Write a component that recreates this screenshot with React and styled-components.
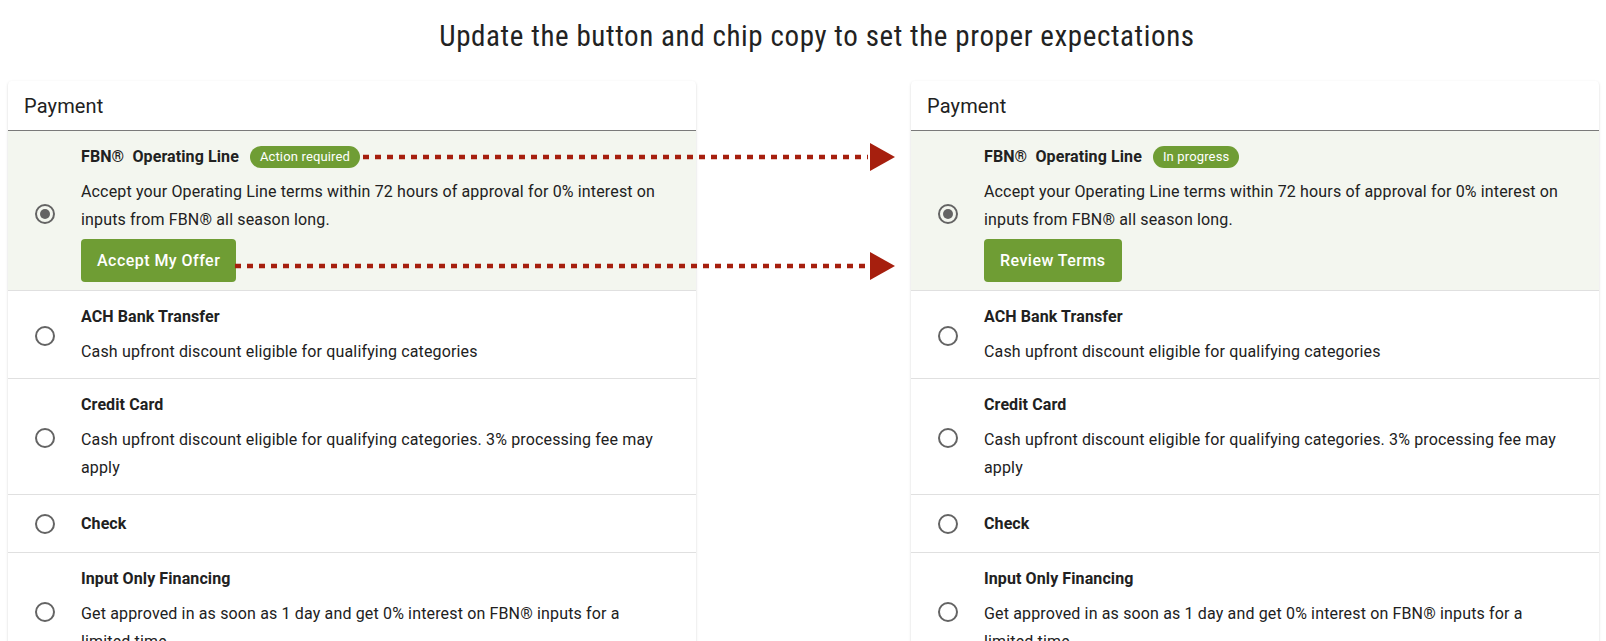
import React from "react";
import styled, { createGlobalStyle } from "styled-components";

const GlobalStyle = createGlobalStyle`
  html, body {
    margin: 0;
    padding: 0;
    background: #ffffff;
    overflow: hidden;
    font-family: Roboto, "Liberation Sans", Arial, sans-serif;
    color: #212121;
  }
  * { box-sizing: border-box; }
`;

const Page = styled.div`
  display: flex;
  flex-direction: column;
  width: 1606px;
`;

const Heading = styled.h1`
  margin: 19px 0 0;
  padding-left: 28px;
  font-family: "Roboto Condensed", Roboto, "Liberation Sans", sans-serif;
  font-weight: 400;
  font-size: 29px;
  line-height: 34px;
  text-align: center;
  color: #222222;
  letter-spacing: 0.6px;
`;

const Stage = styled.div`
  position: relative;
  display: flex;
  justify-content: space-between;
  align-items: flex-start;
  padding: 0 7px 0 8px;
  margin-top: 28px;
`;

const Panel = styled.section`
  width: 688px;
  background: #ffffff;
  border-radius: 4px;
  overflow: hidden;
  box-shadow: 0 2px 1px -1px rgba(0, 0, 0, 0.2), 0 1px 1px 0 rgba(0, 0, 0, 0.14),
    0 1px 3px 0 rgba(0, 0, 0, 0.12);
`;

const PanelHeader = styled.header`
  height: 50px;
  display: flex;
  align-items: center;
  padding: 0 16px;
  font-size: 20px;
  font-weight: 400;
  letter-spacing: 0.15px;
  color: #212121;
  border-bottom: 1px solid #7a7a7a;
`;

const Option = styled.div`
  display: flex;
  align-items: center;
  gap: 26px;
  padding: ${(p) =>
    p.$selected ? "14px 24px 8px 27px" : p.$bare ? "17px 24px 16px 27px" : "14px 24px 12px 27px"};
  background: ${(p) => (p.$selected ? "#f3f6ef" : "#ffffff")};
  border-bottom: 1px solid #e0e0e0;
`;

const Radio = styled.span`
  flex: none;
  width: 20px;
  height: 20px;
  border-radius: 50%;
  border: 2px solid #646464;
  display: flex;
  align-items: center;
  justify-content: center;
  &::after {
    content: "";
    width: 10px;
    height: 10px;
    border-radius: 50%;
    background: #646464;
    display: ${(p) => (p.$checked ? "block" : "none")};
  }
`;

const OptionBody = styled.div`
  display: flex;
  flex-direction: column;
  align-items: flex-start;
  min-width: 0;
`;

const OptionTitle = styled.div`
  display: flex;
  align-items: center;
  gap: 11px;
  font-size: 16px;
  font-weight: 700;
  line-height: 24px;
  letter-spacing: 0.1px;
  color: #212121;
  white-space: pre;
`;

const Chip = styled.span`
  display: inline-flex;
  align-items: center;
  height: 22px;
  padding: 0 10px;
  border-radius: 11px;
  background: #6f9d34;
  color: #ffffff;
  font-size: 13px;
  font-weight: 400;
  letter-spacing: 0.15px;
`;

const Description = styled.p`
  margin: 9px 0 0;
  font-size: 16px;
  line-height: 28px;
  font-weight: 400;
  letter-spacing: 0.15px;
  color: #212121;
`;

const ActionButton = styled.button`
  margin-top: 5px;
  height: 43px;
  padding: 0 16px;
  border: none;
  border-radius: 4px;
  background: #6f9d34;
  color: #ffffff;
  font-family: Roboto, "Liberation Sans", sans-serif;
  font-size: 16px;
  font-weight: 500;
  letter-spacing: 0.46px;
  cursor: pointer;
`;

const Overlay = styled.svg`
  position: absolute;
  left: 0;
  top: 0;
  width: 100%;
  height: 100%;
  pointer-events: none;
  overflow: visible;
`;

const options = [
  {
    key: "ach",
    title: "ACH Bank Transfer",
    desc: "Cash upfront discount eligible for qualifying categories",
  },
  {
    key: "cc",
    title: "Credit Card",
    desc: "Cash upfront discount eligible for qualifying categories. 3% processing fee may apply",
  },
  { key: "check", title: "Check" },
  {
    key: "iof",
    title: "Input Only Financing",
    desc: "Get approved in as soon as 1 day and get 0% interest on FBN® inputs for a limited time.",
  },
];

function PaymentPanel({ chip, action }) {
  return (
    <Panel>
      <PanelHeader>Payment</PanelHeader>
      <Option $selected>
        <Radio $checked />
        <OptionBody>
          <OptionTitle>
            {"FBN®  Operating Line"}
            <Chip>{chip}</Chip>
          </OptionTitle>
          <Description>
            Accept your Operating Line terms within 72 hours of approval for 0% interest on
            inputs from FBN® all season long.
          </Description>
          <ActionButton>{action}</ActionButton>
        </OptionBody>
      </Option>
      {options.map((o) => (
        <Option key={o.key} $bare={!o.desc}>
          <Radio />
          <OptionBody>
            <OptionTitle>{o.title}</OptionTitle>
            {o.desc && <Description>{o.desc}</Description>}
          </OptionBody>
        </Option>
      ))}
    </Panel>
  );
}

function Arrow({ x1, x2, y }) {
  const red = "#a61f0e";
  return (
    <g>
      <line
        x1={x1}
        y1={y}
        x2={x2 - 27}
        y2={y}
        stroke={red}
        strokeWidth="4.5"
        strokeDasharray="6 6"
      />
      <polygon points={`${x2 - 25},${y - 14} ${x2},${y} ${x2 - 25},${y + 14}`} fill={red} />
    </g>
  );
}

export default function App() {
  return (
    <Page>
      <GlobalStyle />
      <Heading>Update the button and chip copy to set the proper expectations</Heading>
      <Stage>
        <PaymentPanel chip="Action required" action="Accept My Offer" />
        <PaymentPanel chip="In progress" action="Review Terms" />
        <Overlay>
          <Arrow x1={363} x2={895} y={76} />
          <Arrow x1={235} x2={895} y={185} />
        </Overlay>
      </Stage>
    </Page>
  );
}
